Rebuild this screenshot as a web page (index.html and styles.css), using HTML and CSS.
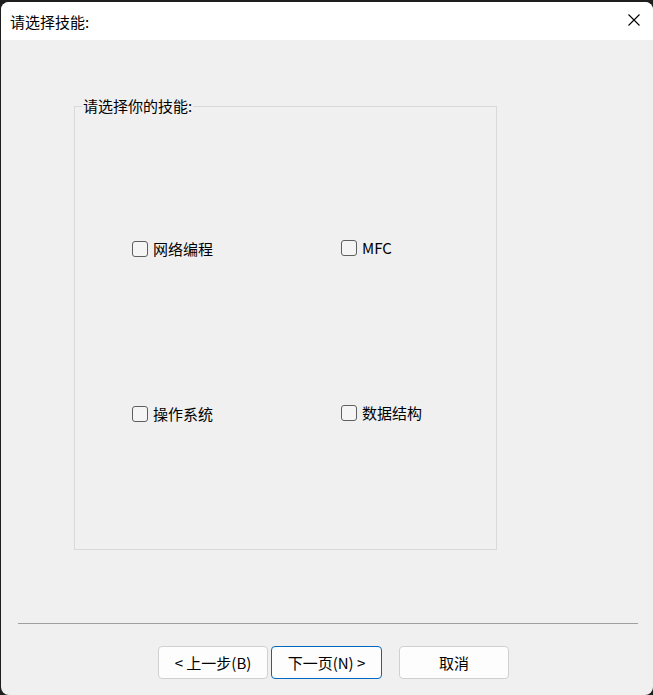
FILE: index.html
```html
<!DOCTYPE html>
<html lang="zh-CN">
<head>
<meta charset="utf-8">
<title>请选择技能:</title>
<link rel="stylesheet" href="styles.css">
</head>
<body>
<div class="window">
  <div class="titlebar">
    <span class="title">请选择技能:</span>
    <svg class="close" width="12" height="12" viewBox="0 0 12 12"><path d="M0.5 0.5 L11.5 11.5 M11.5 0.5 L0.5 11.5" stroke="#000" stroke-width="1.1" fill="none"/></svg>
  </div>
  <div class="content">
    <fieldset class="group">
      <legend class="legend">请选择你的技能:</legend>
      <div class="grid">
        <label class="item"><input type="checkbox" class="cb"><span>网络编程</span></label>
        <label class="item right"><input type="checkbox" class="cb"><span>MFC</span></label>
        <label class="item"><input type="checkbox" class="cb"><span>操作系统</span></label>
        <label class="item right"><input type="checkbox" class="cb"><span>数据结构</span></label>
      </div>
    </fieldset>
    <div class="separator"></div>
    <div class="buttons">
      <button class="btn">&lt; 上一步(B)</button>
      <button class="btn default">下一页(N) &gt;</button>
      <button class="btn cancel">取消</button>
    </div>
  </div>
</div>
</body>
</html>
```
FILE: styles.css
```css
html, body {
  margin: 0;
  padding: 0;
  height: 695px;
  overflow: hidden;
  background: #1e1e1e;
  font-family: "Noto Sans CJK SC", "Noto Sans", sans-serif;
  font-size: 15px;
  color: #000;
}
.window {
  margin: 2px 0 0 1px;
  width: 652px;
  height: 693px;
  border-radius: 8px;
  background: #f0f0f0;
  overflow: hidden;
  display: flex;
  flex-direction: column;
}
.titlebar {
  height: 38px;
  background: #ffffff;
  display: flex;
  align-items: center;
  justify-content: space-between;
  padding: 0 13px 0 9px;
  flex: none;
}
.title {
  line-height: 18px;
  margin-top: 1px;
}
.close {
  display: block;
  margin-top: -2px;
}
.content {
  display: flex;
  flex-direction: column;
}
.group {
  box-sizing: border-box;
  margin: 57px 0 0 73px;
  width: 423px;
  height: 453px;
  border: 1px solid #d9d9d9;
  padding: 0;
  min-inline-size: 0;
}
.legend {
  margin-left: 7px;
  padding: 0 1px;
  line-height: 18px;
}
.grid {
  display: grid;
  grid-template-columns: 209px auto;
  grid-auto-rows: 16px;
  row-gap: 149px;
  padding: 126px 0 0 57px;
}
.item {
  display: flex;
  align-items: center;
  gap: 5px;
  line-height: 16px;
}
.item.right {
  margin-top: -2px;
}
.cb {
  appearance: none;
  -webkit-appearance: none;
  box-sizing: border-box;
  width: 16px;
  height: 16px;
  margin: 0;
  border: 1px solid #5f5f5f;
  border-radius: 3px;
  background: #f5f5f5;
  flex: none;
}
.separator {
  margin: 73px 0 0 17px;
  width: 620px;
  height: 1px;
  background: #a0a0a0;
}
.buttons {
  display: flex;
  margin: 22px 0 0 157px;
  gap: 3px;
}
.btn {
  box-sizing: border-box;
  width: 110px;
  height: 33px;
  border: 1px solid #d0d0d0;
  border-radius: 4px;
  background: #fdfdfd;
  font-family: "Noto Sans CJK SC", "Noto Sans", sans-serif;
  font-size: 15px;
  color: #000;
  padding: 0;
  line-height: 18px;
}
.btn.default {
  width: 111px;
  border-color: #0067c0;
}
.btn.cancel {
  margin-left: 14px;
}
```
